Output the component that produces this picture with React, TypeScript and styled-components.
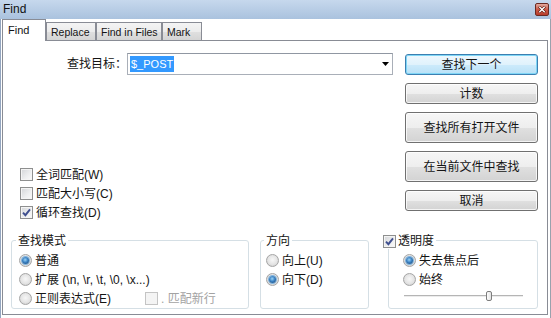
import React from "react";
import styled, { createGlobalStyle, css } from "styled-components";

const FONT = `"Liberation Sans", "Noto Sans CJK SC", sans-serif`;

const Global = createGlobalStyle`
  html, body { margin: 0; padding: 0; background: #fff; }
  body { width: 551px; height: 318px; overflow: hidden; font-family: ${FONT}; }
  * { box-sizing: border-box; }
`;

const Window = styled.div`
  width: 551px;
  height: 318px;
  display: flex;
  flex-direction: column;
  background: #fff;
  font-family: ${FONT};
  font-size: 12px;
  color: #141414;
`;

const TitleBar = styled.div`
  height: 19px;
  flex: none;
  display: flex;
  align-items: center;
  justify-content: space-between;
  padding: 0 2px 0 3px;
  background: linear-gradient(#c6d8ed, #aac2de);
`;

const Title = styled.span`
  font-size: 12px;
  line-height: 19px;
  color: #111;
`;

const CloseButton = styled.div`
  width: 14px;
  height: 13px;
  border: 1px solid #6b2a22;
  border-radius: 2px;
  background: linear-gradient(#e2aa9f, #cc5a48 50%, #b73c2b);
  display: flex;
  align-items: center;
  justify-content: center;
`;

const Body = styled.div`
  flex: 1;
  display: flex;
  flex-direction: column;
  border-left: 1px solid #93a5bf;
  border-right: 1px solid #9aa2ad;
  padding: 0 2px 3px 1px;
`;

const TabStrip = styled.div`
  height: 21px;
  flex: none;
  display: flex;
  align-items: flex-end;
`;

const Tab = styled.div<{ $active?: boolean; $w: number }>`
  width: ${(p) => p.$w}px;
  height: ${(p) => (p.$active ? 22 : 18)}px;
  margin-bottom: ${(p) => (p.$active ? -1 : 0)}px;
  padding: 0 0 ${(p) => (p.$active ? 2 : 0)}px ${(p) => (p.$active ? 5 : 4)}px;
  display: flex;
  align-items: center;
  border: 1px solid #898c95;
  border-bottom: none;
  background: ${(p) =>
    p.$active ? "#fff" : "linear-gradient(#f4f4f4, #ececec 50%, #e0e0e0 51%, #d4d4d4)"};
  font-size: ${(p) => (p.$active ? 11 : 10.5)}px;
  white-space: nowrap;
  overflow: hidden;
  position: relative;
  z-index: 1;
`;

const Panel = styled.div`
  flex: 1;
  border: 1px solid #898c95;
  background: #fff;
  display: flex;
  flex-direction: column;
`;

const TopSection = styled.div`
  display: flex;
  justify-content: space-between;
  padding: 13px 9px 0 0;
`;

const LeftColumn = styled.div`
  flex: 1;
  display: flex;
  flex-direction: column;
`;

const SearchRow = styled.div`
  display: flex;
  align-items: center;
  height: 22px;
  margin-top: -1px;
`;

const FieldLabel = styled.span`
  width: 124px;
  text-align: right;
  line-height: 16px;
  white-space: nowrap;
`;

const Combo = styled.div`
  width: 266px;
  height: 22px;
  border: 1px solid #a9afb8;
  border-top-color: #9097a2;
  background: #fff;
  display: flex;
  align-items: center;
  justify-content: space-between;
  padding: 0 3px 0 2px;
`;

const Selected = styled.span`
  background: #3399ff;
  color: #fff;
  font-size: 11px;
  line-height: 16px;
  padding: 0 1px;
`;

const CheckList = styled.div`
  margin: 90px 0 0 17px;
  display: flex;
  flex-direction: column;
`;

const OptionRow = styled.label<{ $disabled?: boolean }>`
  display: flex;
  align-items: center;
  gap: 3px;
  height: 19px;
  line-height: 16px;
  white-space: nowrap;
  color: ${(p) => (p.$disabled ? "#a3a3a3" : "#141414")};
`;

const Box = styled.span<{ $disabled?: boolean }>`
  width: 13px;
  height: 13px;
  flex: none;
  border: 1px solid ${(p) => (p.$disabled ? "#c4c4c4" : "#8e8f8f")};
  background: ${(p) =>
    p.$disabled ? "#f4f4f4" : "linear-gradient(135deg, #d3d5d8, #eeeff0 60%, #fafafa)"};
  box-shadow: inset 0 0 0 1px #f4f4f4;
  display: flex;
  align-items: center;
  justify-content: center;
`;

const RadioDot = styled.span<{ $checked?: boolean }>`
  width: 13px;
  height: 13px;
  flex: none;
  border-radius: 50%;
  border: 1px solid #a5a5a5;
  background: radial-gradient(circle at 50% 45%, #f7f7f7 0, #e4e4e4 55%, #d2d2d2 80%, #ececec 100%);
  display: flex;
  align-items: center;
  justify-content: center;
  ${(p) =>
    p.$checked &&
    css`
      &::after {
        content: "";
        width: 7px;
        height: 7px;
        border-radius: 50%;
        background: radial-gradient(circle at 45% 40%, #9ad4f6 0, #3b82c4 45%, #123f6c 100%);
        box-shadow: 0 0 0 1px #7fb2dc;
      }
    `}
`;

const ButtonColumn = styled.div`
  display: flex;
  flex-direction: column;
  gap: 8px;
`;

const Button = styled.button<{ $tall?: boolean; $default?: boolean }>`
  width: 133px;
  height: ${(p) => (p.$tall ? 31 : 21)}px;
  border: 1px solid #707070;
  border-radius: 3px;
  background: linear-gradient(#f6f6f6 0%, #eeeeee 50%, #e0e0e0 51%, #d3d3d3 100%);
  box-shadow: inset 0 0 0 1px rgba(255, 255, 255, 0.75);
  font: 12px ${FONT};
  line-height: 16px;
  color: #141414;
  padding: 0;
  ${(p) =>
    p.$default &&
    css`
      border-color: #3c7fb1;
      background: linear-gradient(#eef8fe 0%, #e0f2fc 50%, #cdebfb 51%, #b9e1f7 100%);
      box-shadow: inset 0 0 0 1px #7fd6f6;
    `}
`;

const BottomRow = styled.div`
  display: flex;
  margin-top: 18px;
  padding-left: 8px;
`;

const GroupBox = styled.div<{ $w: number; $pl: number; $ml: number }>`
  width: ${(p) => p.$w}px;
  height: 69px;
  margin-left: ${(p) => p.$ml}px;
  border: 1px solid #d5dfe5;
  border-radius: 3px;
  padding-left: ${(p) => p.$pl}px;
  display: flex;
  flex-direction: column;
  flex: none;
`;

const Legend = styled.div<{ $ml: number }>`
  margin-top: -8px;
  margin-left: ${(p) => p.$ml}px;
  align-self: flex-start;
  background: #fff;
  padding: 0 2px;
  height: 16px;
  line-height: 16px;
  display: flex;
  align-items: center;
  gap: 2px;
  white-space: nowrap;
`;

const Options = styled.div`
  padding-top: 2px;
  display: flex;
  flex-direction: column;
`;

const SubOption = styled.span`
  margin-left: 31px;
  display: flex;
  align-items: center;
  gap: 3px;
  color: #a3a3a3;
`;

const SliderRow = styled.div`
  height: 14px;
  width: 119px;
  margin-left: 1px;
  display: flex;
  align-items: center;
  position: relative;
`;

const Track = styled.div`
  width: 100%;
  height: 2px;
  border-top: 1px solid #b5b5b5;
  border-bottom: 1px solid #ececec;
`;

const Thumb = styled.div`
  position: absolute;
  top: 2px;
  width: 6px;
  height: 10px;
  border: 1px solid #7d7d7d;
  border-radius: 2px;
  background: linear-gradient(90deg, #fdfdfd, #e2e2e2);
`;

const Check = () => (
  <svg width="9" height="9" viewBox="0 0 9 9">
    <path d="M1 4.6 L3.4 7.2 L8 1.4" fill="none" stroke="#3f4f8f" strokeWidth="1.9" />
  </svg>
);

const CheckBox = ({ checked, disabled }: { checked?: boolean; disabled?: boolean }) => (
  <Box $disabled={disabled}>{checked && <Check />}</Box>
);

const tabs = [
  { label: "Find", w: 44, active: true },
  { label: "Replace", w: 50 },
  { label: "Find in Files", w: 66 },
  { label: "Mark", w: 40 },
];

export default function App() {
  const sliderValue = 0.69;
  return (
    <Window>
      <Global />
      <TitleBar>
        <Title>Find</Title>
        <CloseButton>
          <svg width="8" height="7" viewBox="0 0 8 7">
            <path d="M1 0.5 L7 6.5 M7 0.5 L1 6.5" stroke="#5a1a12" strokeWidth="2.6" />
            <path d="M1.3 0.8 L6.7 6.2 M6.7 0.8 L1.3 6.2" stroke="#fff" strokeWidth="1.4" />
          </svg>
        </CloseButton>
      </TitleBar>
      <Body>
        <TabStrip>
          {tabs.map((t) => (
            <Tab key={t.label} $active={t.active} $w={t.w}>
              {t.label}
            </Tab>
          ))}
        </TabStrip>
        <Panel>
          <TopSection>
            <LeftColumn>
              <SearchRow>
                <FieldLabel>查找目标：</FieldLabel>
                <Combo>
                  <Selected>$_POST</Selected>
                  <svg width="7" height="4" viewBox="0 0 7 4">
                    <path d="M0 0 H7 L3.5 4 Z" fill="#000" />
                  </svg>
                </Combo>
              </SearchRow>
              <CheckList>
                <OptionRow>
                  <CheckBox />
                  全词匹配(W)
                </OptionRow>
                <OptionRow>
                  <CheckBox />
                  匹配大小写(C)
                </OptionRow>
                <OptionRow>
                  <CheckBox checked />
                  循环查找(D)
                </OptionRow>
              </CheckList>
            </LeftColumn>
            <ButtonColumn>
              <Button $default>查找下一个</Button>
              <Button>计数</Button>
              <Button $tall>查找所有打开文件</Button>
              <Button $tall>在当前文件中查找</Button>
              <Button>取消</Button>
            </ButtonColumn>
          </TopSection>
          <BottomRow>
            <GroupBox $w={238} $pl={7} $ml={0}>
              <Legend $ml={-3}>查找模式</Legend>
              <Options>
                <OptionRow>
                  <RadioDot $checked />
                  普通
                </OptionRow>
                <OptionRow>
                  <RadioDot />
                  扩展 (\n, \r, \t, \0, \x...)
                </OptionRow>
                <OptionRow>
                  <RadioDot />
                  正则表达式(E)
                  <SubOption>
                    <CheckBox disabled />. 匹配新行
                  </SubOption>
                </OptionRow>
              </Options>
            </GroupBox>
            <GroupBox $w={109} $pl={5} $ml={11}>
              <Legend $ml={-2}>方向</Legend>
              <Options>
                <OptionRow>
                  <RadioDot />
                  向上(U)
                </OptionRow>
                <OptionRow>
                  <RadioDot $checked />
                  向下(D)
                </OptionRow>
              </Options>
            </GroupBox>
            <GroupBox $w={150} $pl={14} $ml={19}>
              <Legend $ml={-22}>
                <CheckBox checked />
                透明度
              </Legend>
              <Options>
                <OptionRow>
                  <RadioDot $checked />
                  失去焦点后
                </OptionRow>
                <OptionRow>
                  <RadioDot />
                  始终
                </OptionRow>
                <SliderRow>
                  <Track />
                  <Thumb style={{ left: `${Math.round(sliderValue * 119)}px` }} />
                </SliderRow>
              </Options>
            </GroupBox>
          </BottomRow>
        </Panel>
      </Body>
    </Window>
  );
}
